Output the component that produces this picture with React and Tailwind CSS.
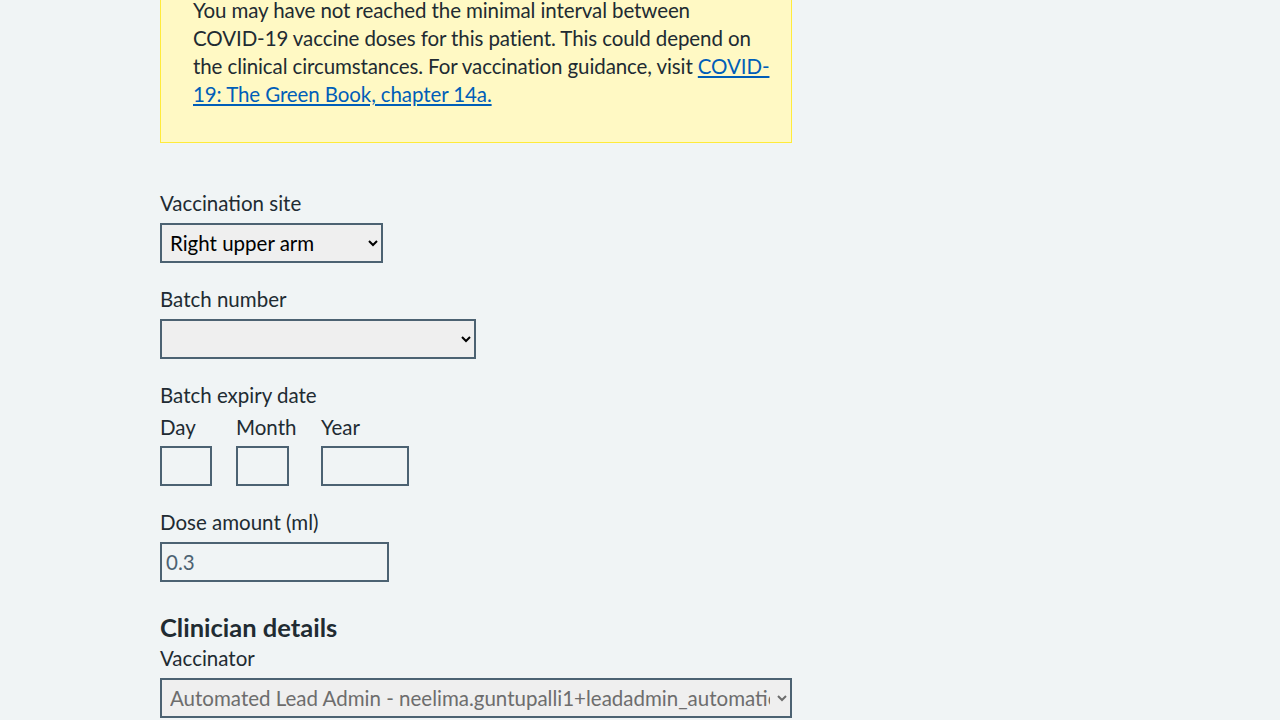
export default function App() {
  const font = { fontFamily: "Lato, 'Noto Sans', sans-serif" };
  return (
    <div className="min-h-screen bg-[#f0f4f5] text-[#212b32] overflow-hidden" style={font}>
      <div className="ml-[160px] w-[632px]">
        <div className="mt-[-40px] border border-[#ffeb3b] bg-[#fff9c4] pt-[35px] pb-[34px] px-[32px] text-[20.5px] leading-[28px]">
          <p className="whitespace-nowrap tracking-[-0.1px]">
            You may have not reached the minimal interval between<br />
            COVID-19 vaccine doses for this patient. This could depend on<br />
            the clinical circumstances. For vaccination guidance, visit{" "}
            <a href="#" className="text-[#005eb8] underline underline-offset-2">
              COVID-<br />19: The Green Book, chapter 14a.
            </a>
          </p>
        </div>

        <div className="mt-[46px] text-[20.5px] leading-[28px]">
          <label className="block mb-[6px]">Vaccination site</label>
          <select className="block w-[223px] h-[40px] border-2 border-[#4c6272] bg-[#efefef] text-black text-[20.5px] pl-[4px] pr-[4px]" defaultValue="rua">
            <option value="rua">Right upper arm</option>
          </select>

          <label className="block mt-[22px] mb-[6px]">Batch number</label>
          <select className="block w-[316px] h-[40px] border-2 border-[#4c6272] bg-[#efefef] text-black text-[20.5px] pl-[4px] pr-[4px]">
            <option></option>
          </select>

          <label className="block mt-[22px]">Batch expiry date</label>
          <div className="flex mt-[4px]">
            <div className="mr-[24px]">
              <label className="block mb-[5px]">Day</label>
              <input className="block w-[52px] h-[40px] border-2 border-[#4c6272] bg-transparent" />
            </div>
            <div className="mr-[24px] min-w-[61px]">
              <label className="block mb-[5px]">Month</label>
              <input className="block w-[53px] h-[40px] border-2 border-[#4c6272] bg-transparent" />
            </div>
            <div>
              <label className="block mb-[5px]">Year</label>
              <input className="block w-[88px] h-[40px] border-2 border-[#4c6272] bg-transparent" />
            </div>
          </div>

          <label className="block mt-[22px] mb-[6px]">Dose amount (ml)</label>
          <input
            className="block w-[229px] h-[40px] border-2 border-[#4c6272] bg-transparent px-[4px] text-[20.5px] text-[#4c6272]"
            defaultValue="0.3"
          />

          <h2 className="mt-[29px] text-[25.5px] leading-[32px] font-bold">Clinician details</h2>
          <label className="block mt-[1px] mb-[6px]">Vaccinator</label>
          <select
            disabled
            className="block w-[632px] h-[40px] border-2 border-[#4c6272] bg-[#efefef] text-[#6d6d6d] text-[20.5px] pl-[4px] pr-[4px]"
          >
            <option>Automated Lead Admin - neelima.guntupalli1+leadadmin_automation@nhs.net</option>
          </select>
        </div>
      </div>
    </div>
  );
}
